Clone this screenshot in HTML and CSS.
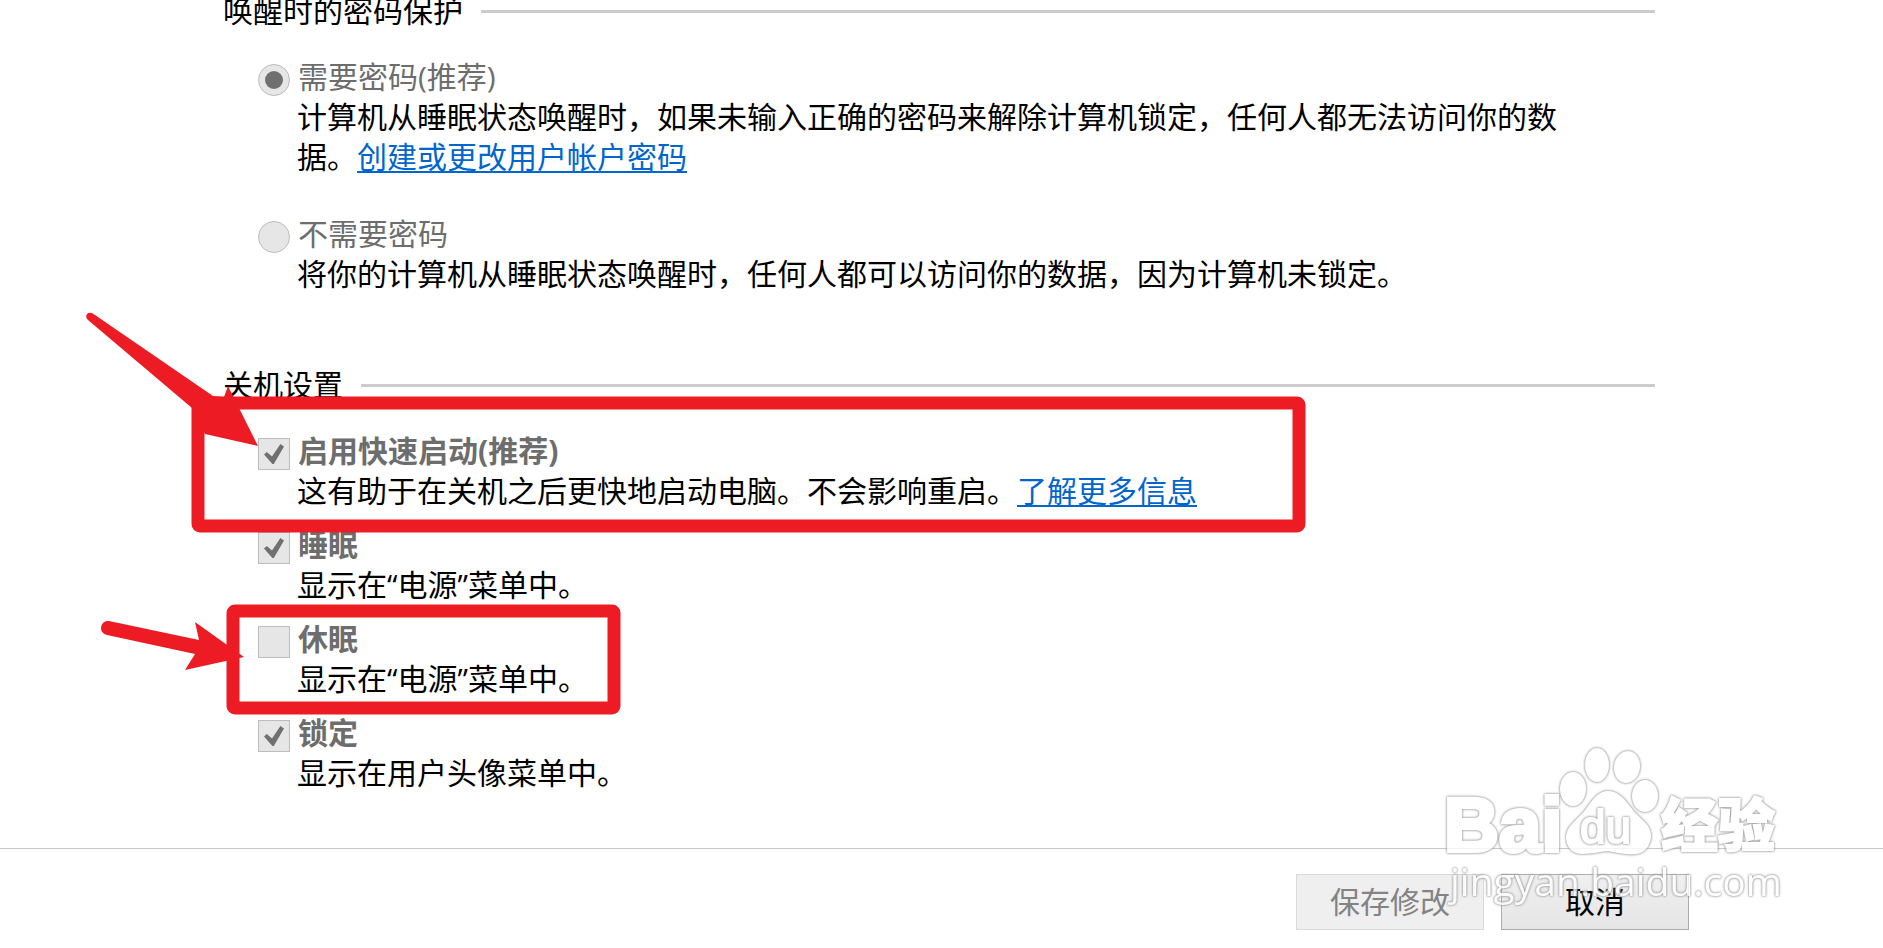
FILE: index.html
```html
<!DOCTYPE html>
<html lang="zh-CN">

<head>
    <meta charset="UTF-8">
    <meta name="viewport" content="width=device-width, initial-scale=1.0">
    <title>系统设置</title>
    <link rel="stylesheet" href="styles.css">
</head>

<body>
    <main class="settings">
        <section class="group">
            <h2 class="group-title">唤醒时的密码保护</h2>
            <div class="option option-radio">
                <input type="radio" name="wake" id="needPassword" checked disabled>
                <label for="needPassword">需要密码(推荐)</label>
                <p>计算机从睡眠状态唤醒时，如果未输入正确的密码来解除计算机锁定，任何人都无法访问你的数据。<a href="#">创建或更改用户帐户密码</a></p>
            </div>
            <div class="option option-radio">
                <input type="radio" name="wake" id="noPassword" disabled>
                <label for="noPassword">不需要密码</label>
                <p>将你的计算机从睡眠状态唤醒时，任何人都可以访问你的数据，因为计算机未锁定。</p>
            </div>
        </section>

        <section class="group">
            <h2 class="group-title">关机设置</h2>
            <div class="option">
                <input type="checkbox" id="fastStartup" checked disabled>
                <label for="fastStartup">启用快速启动(推荐)</label>
                <p>这有助于在关机之后更快地启动电脑。不会影响重启。<a href="#">了解更多信息</a></p>
            </div>
            <div class="option">
                <input type="checkbox" id="sleep" checked disabled>
                <label for="sleep">睡眠</label>
                <p>显示在“电源”菜单中。</p>
            </div>
            <div class="option">
                <input type="checkbox" id="hibernate" disabled>
                <label for="hibernate">休眠</label>
                <p>显示在“电源”菜单中。</p>
            </div>
            <div class="option">
                <input type="checkbox" id="lock" checked disabled>
                <label for="lock">锁定</label>
                <p>显示在用户头像菜单中。</p>
            </div>
        </section>
    </main>

    <footer class="actions">
        <button type="button" disabled>保存修改</button>
        <button type="button">取消</button>
    </footer>

    <!-- Red marks drawn over the settings -->
    <svg class="marks" width="1320" height="720" viewBox="0 0 1320 720" aria-hidden="true">
        <rect x="198" y="403" width="1101" height="123" rx="2" />
        <rect x="233" y="611" width="381" height="97" rx="2" />
        <path d="M87 314 Q90 311 95 315 L213 396 L224 397 L228 386 L240 410 L258 446 L205 434 L192 408 L88 320 Q85 317 87 314Z" />
        <path d="M109 621 L199 640 L195 622 L244 657 L185 670 L195 654 L107 635 A7 7 0 0 1 109 621Z" />
    </svg>

    <!-- Watermark -->
    <svg class="watermark" width="360" height="180" viewBox="1440 740 360 180" aria-hidden="true">
        <g class="wm-glow">
            <text class="wm-name" x="1444" y="851">Bai</text>
            <ellipse cx="1597" cy="765" rx="11" ry="16" />
            <ellipse cx="1627" cy="767" rx="12" ry="15" transform="rotate(10 1627 767)" />
            <ellipse cx="1573" cy="789" rx="12" ry="16" />
            <ellipse cx="1645" cy="796" rx="12" ry="15" />
            <path d="M1608 792 C1597 792 1591 804 1584 813 C1576 822 1567 827 1567 838 C1569 860 1588 852 1608 850 C1624 853 1646 860 1650 838 C1651 826 1641 820 1634 813 C1626 803 1620 792 1608 792Z" />
            <text class="wm-cjk" x="1661" y="846">经验</text>
        </g>
        <g class="wm-glow">
            <text class="wm-du" x="1580" y="843">du</text>
            <text class="wm-url" x="1450" y="896">jingyan.baidu.com</text>
        </g>
    </svg>
</body>

</html>
```

FILE: styles.css
```css
* {
    box-sizing: border-box;
}

body {
    margin: 0;
    background-color: #fff;
    color: #000;
    font-family: "Open Sans", "Noto Sans CJK SC", sans-serif;
    font-size: 30px;
    line-height: 40px;
    position: relative;
    overflow-x: hidden;
}

h2,
p {
    margin: 0;
}

a {
    color: #0066cc;
    text-decoration: underline;
    text-decoration-thickness: 2px;
    text-underline-offset: 3px;
}

.settings {
    padding: 0 228px 0 223px;
    margin-top: -9px;
}

.group-title {
    display: flex;
    align-items: center;
    gap: 18px;
    font-size: 30px;
    font-weight: normal;
    margin-bottom: 26px;
}

/* Rule that runs on from the title */
.group-title::after {
    content: "";
    flex: 1;
    height: 3px;
    background-color: #ccc;
}

.option {
    display: grid;
    grid-template-columns: 32px 1fr;
    column-gap: 7px;
    padding: 0 80px 14px 35px;
}

.option label {
    color: #6d6d6d;
    font-weight: bold;
    padding-left: 1px;
}

.option p {
    grid-column: 2;
}

.option-radio {
    padding-bottom: 37px;
}

.option-radio label {
    font-weight: normal;
}

.option-radio:last-child {
    padding-bottom: 71px;
}

input {
    appearance: none;
    width: 32px;
    height: 32px;
    margin: 7px 0 0;
    border: 1px solid #bcbcbc;
    background-color: #e6e6e6;
    display: grid;
    place-items: center;
}

input[type="radio"] {
    border-radius: 50%;
}

input[type="radio"]:checked::before {
    content: "";
    width: 18px;
    height: 18px;
    border-radius: 50%;
    background-color: #707070;
}

input[type="checkbox"]:checked::before {
    content: "";
    width: 20px;
    height: 20px;
    background-color: #707070;
    clip-path: polygon(0 53%, 14% 40%, 40% 62%, 82% 0, 100% 12%, 49% 100%, 42% 100%);
}

.actions {
    display: flex;
    justify-content: flex-end;
    gap: 17px;
    margin-top: 41px;
    padding: 25px 194px 12px 0;
    border-top: 1px solid #c8c8c8;
}

button {
    width: 188px;
    height: 56px;
    padding: 0;
    border: 1px solid #acacac;
    background: linear-gradient(#f0f0f0, #e5e5e5);
    color: #000;
    font-family: inherit;
    font-size: 30px;
    line-height: 40px;
}

button:disabled {
    border-color: #d9d9d9;
    background: #efefef;
    color: #838383;
}

.marks {
    position: absolute;
    top: 0;
    left: 0;
    pointer-events: none;
}

.marks rect {
    fill: none;
    stroke: #ed1c24;
    stroke-width: 13px;
    stroke-linejoin: round;
}

.marks path {
    fill: #ed1c24;
}

.watermark {
    position: absolute;
    top: 740px;
    right: 83px;
    pointer-events: none;
    fill: #fff;
    stroke: #fff;
    stroke-width: 2px;
    opacity: 0.8;
}

/* White shapes with a soft grey edge */
.wm-glow {
    filter: drop-shadow(0 0 1px #777) drop-shadow(0 0 1px #bbb);
}

.wm-name {
    font: bold 76px "Liberation Sans", sans-serif;
    stroke-width: 4px;
}

.wm-du {
    font: 46px "Liberation Sans", sans-serif;
}

.wm-cjk {
    font: 900 57px "Noto Sans CJK SC", sans-serif;
}

.wm-url {
    font: 39px "Open Sans", sans-serif;
    stroke-width: 0;
}
```
